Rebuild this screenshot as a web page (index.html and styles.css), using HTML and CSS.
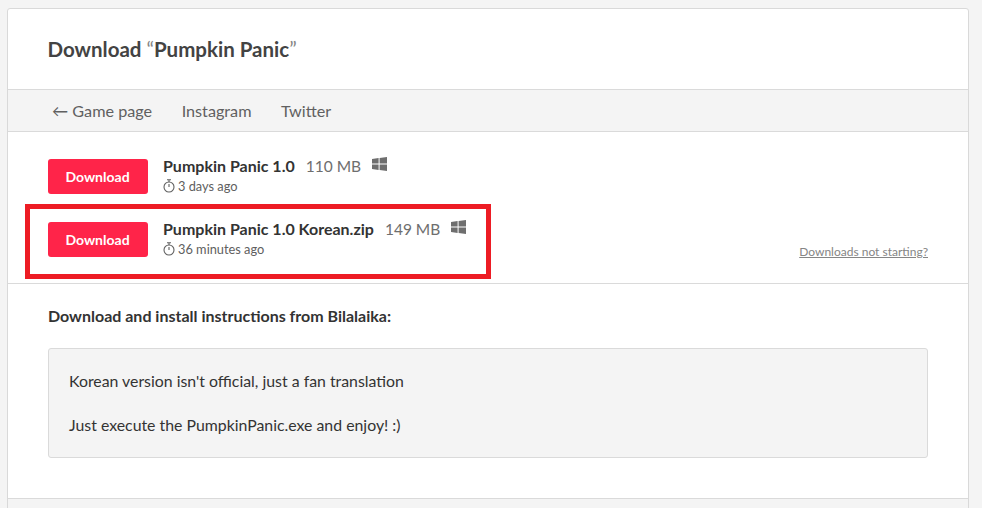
FILE: index.html
```html
<!DOCTYPE html>
<html lang="en">
<head>
  <meta charset="UTF-8">
  <title>Download Pumpkin Panic</title>
  <link rel="stylesheet" href="styles.css">
</head>
<body>
  <div class="page">
    <!-- Page title -->
    <div class="header">
      <h2>Download <span class="quote">“</span>Pumpkin Panic<span class="quote">”</span></h2>
    </div>

    <!-- Links bar -->
    <div class="nav">
      <a href="#">← Game page</a>
      <a href="#">Instagram</a>
      <a href="#">Twitter</a>
    </div>

    <!-- Uploads -->
    <div class="uploads">
      <div class="upload">
        <a class="button" href="#">Download</a>
        <div class="info">
          <div class="name-row">
            <strong class="name">Pumpkin Panic 1.0</strong>
            <span class="size">110 MB</span>
            <svg class="win-icon" viewBox="0 0 15 14"><path d="M0 2 6.6 1V6.6H0ZM7.6.9 15 0V6.6H7.6ZM0 7.6H6.6V13L0 12ZM7.6 7.6H15V14L7.6 13.1Z"/></svg>
          </div>
          <div class="date">
            <svg class="clock-icon" viewBox="0 0 12 14"><circle cx="6" cy="8" r="5"/><path d="M4 .8H8M6 1V3M6 8V5"/></svg>
            3 days ago
          </div>
        </div>
      </div>
      <div class="upload">
        <a class="button" href="#">Download</a>
        <div class="info">
          <div class="name-row">
            <strong class="name">Pumpkin Panic 1.0 Korean.zip</strong>
            <span class="size">149 MB</span>
            <svg class="win-icon" viewBox="0 0 15 14"><path d="M0 2 6.6 1V6.6H0ZM7.6.9 15 0V6.6H7.6ZM0 7.6H6.6V13L0 12ZM7.6 7.6H15V14L7.6 13.1Z"/></svg>
          </div>
          <div class="date">
            <svg class="clock-icon" viewBox="0 0 12 14"><circle cx="6" cy="8" r="5"/><path d="M4 .8H8M6 1V3M6 8V5"/></svg>
            36 minutes ago
          </div>
        </div>
        <a class="not-starting" href="#">Downloads not starting?</a>
      </div>
      <div class="highlight"></div>
    </div>

    <!-- Instructions -->
    <div class="instructions">
      <h4>Download and install instructions from Bilalaika:</h4>
      <div class="content-box">
        <p>Korean version isn't official, just a fan translation</p>
        <p>Just execute the PumpkinPanic.exe and enjoy! :)</p>
      </div>
    </div>

    <div class="footer"></div>
  </div>
</body>
</html>
```

FILE: styles.css
```css
/* Page background */
body {
  margin: 0;
  height: 508px;
  overflow: hidden;
  background: #f4f4f4;
  font-family: Lato, "Open Sans", sans-serif;
  color: #434343;
}

/* Main white card */
.page {
  margin: 8px 13px 0 7px;
  background: #fff;
  border: 1px solid #d9d9d9;
  border-radius: 3px 3px 0 0;
}

/* Title */
.header {
  height: 81px;
  padding: 0 39.5px;
  display: flex;
  align-items: center;
  box-sizing: border-box;
  border-bottom: 1px solid #dadada;
}
.header h2 {
  margin: 0;
  font-size: 20.5px;
  font-weight: 700;
  color: #434343;
}
.quote {
  font-weight: 400;
  color: #858585;
}

/* Links bar */
.nav {
  height: 42px;
  box-sizing: border-box;
  padding: 0 44px;
  display: flex;
  align-items: center;
  gap: 29.5px;
  background: #f4f4f4;
  border-bottom: 1px solid #dadada;
  font-size: 16.2px;
}
.nav a {
  color: #606060;
  text-decoration: none;
}

/* Upload rows */
.uploads {
  position: relative;
  padding: 27px 40px 31px;
  border-bottom: 1px solid #dadada;
  height: 152px;
  box-sizing: border-box;
}
.upload {
  display: flex;
  align-items: center;
  height: 35px;
  margin-bottom: 28px;
}
.upload:last-of-type {
  margin-bottom: 0;
}
.button {
  width: 100px;
  height: 35px;
  line-height: 35px;
  flex: none;
  text-align: center;
  background: #ff2449;
  border-radius: 3px;
  color: #fff;
  font-size: 14px;
  font-weight: 700;
  text-decoration: none;
  text-indent: -1px;
}
.info {
  margin-left: 15px;
  margin-top: -1px;
}
.name-row {
  display: flex;
  align-items: center;
  line-height: 20px;
}
.name {
  font-size: 16px;
  font-weight: 700;
  color: #333;
}
.size {
  margin-left: 11px;
  font-size: 15.5px;
  color: #6e6e6e;
}
.win-icon {
  width: 15px;
  height: 14px;
  margin: -5px 0 0 11px;
  fill: #6e6e6e;
}
.date {
  display: flex;
  align-items: center;
  gap: 3px;
  font-size: 12.8px;
  line-height: 20px;
  color: #606060;
}
.clock-icon {
  width: 12px;
  height: 14px;
  fill: none;
  stroke: #606060;
  stroke-width: 1.1;
}
.not-starting {
  margin: 24px 0 0 auto;
  font-size: 12px;
  color: #858585;
}

/* Red annotation around the second row */
.highlight {
  position: absolute;
  left: 17px;
  top: 72px;
  width: 466px;
  height: 75px;
  box-sizing: border-box;
  border: 5px solid #ed1c24;
}

/* Instructions */
.instructions {
  padding: 23px 40px 40px;
  height: 215px;
  box-sizing: border-box;
  border-bottom: 1px solid #dadada;
}
.instructions h4 {
  margin: 0 0 23px;
  font-size: 16px;
  line-height: 18px;
  font-weight: 700;
  color: #333;
}
.content-box {
  height: 110px;
  box-sizing: border-box;
  padding: 11px 20px;
  background: #f4f4f4;
  border: 1px solid #dadada;
  border-radius: 3px;
  font-size: 15.85px;
  line-height: 22px;
  color: #333;
}
.content-box p {
  margin: 10px 0 22px;
}

.footer {
  height: 20px;
  background: #f4f4f4;
}
```
